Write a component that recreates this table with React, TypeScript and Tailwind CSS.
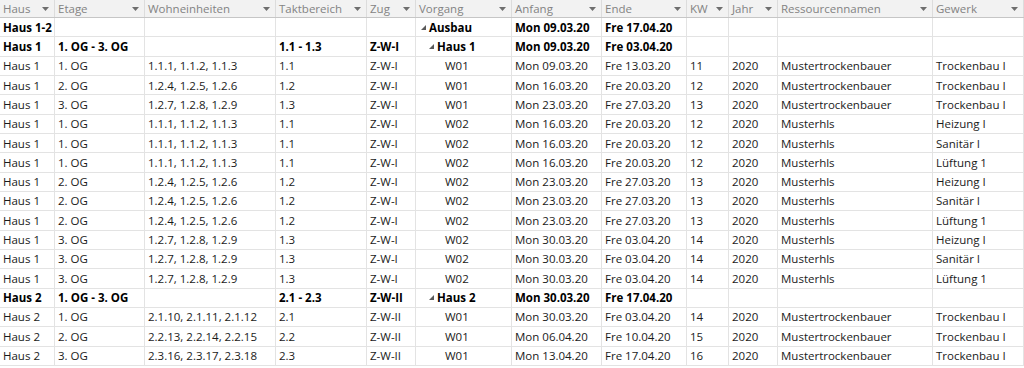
const cols = [
  "Haus",
  "Etage",
  "Wohneinheiten",
  "Taktbereich",
  "Zug",
  "Vorgang",
  "Anfang",
  "Ende",
  "KW",
  "Jahr",
  "Ressourcennamen",
  "Gewerk",
];

type Row = {
  bold?: boolean;
  level: number; // 0 = Ausbau, 1 = Haus, 2 = Vorgang
  cells: string[];
};

const hls = (
  haus: string,
  etage: string,
  we: string,
  takt: string,
  zug: string,
  w: string,
  start: string,
  end: string,
  kw: string,
  res: string,
  gewerk: string
): Row => ({
  level: 2,
  cells: [haus, etage, we, takt, zug, w, start, end, kw, "2020", res, gewerk],
});

const rows: Row[] = [
  { bold: true, level: 0, cells: ["Haus 1-2", "", "", "", "", "Ausbau", "Mon 09.03.20", "Fre 17.04.20", "", "", "", ""] },
  { bold: true, level: 1, cells: ["Haus 1", "1. OG - 3. OG", "", "1.1 - 1.3", "Z-W-I", "Haus 1", "Mon 09.03.20", "Fre 03.04.20", "", "", "", ""] },
  hls("Haus 1", "1. OG", "1.1.1, 1.1.2, 1.1.3", "1.1", "Z-W-I", "W01", "Mon 09.03.20", "Fre 13.03.20", "11", "Mustertrockenbauer", "Trockenbau I"),
  hls("Haus 1", "2. OG", "1.2.4, 1.2.5, 1.2.6", "1.2", "Z-W-I", "W01", "Mon 16.03.20", "Fre 20.03.20", "12", "Mustertrockenbauer", "Trockenbau I"),
  hls("Haus 1", "3. OG", "1.2.7, 1.2.8, 1.2.9", "1.3", "Z-W-I", "W01", "Mon 23.03.20", "Fre 27.03.20", "13", "Mustertrockenbauer", "Trockenbau I"),
  hls("Haus 1", "1. OG", "1.1.1, 1.1.2, 1.1.3", "1.1", "Z-W-I", "W02", "Mon 16.03.20", "Fre 20.03.20", "12", "Musterhls", "Heizung I"),
  hls("Haus 1", "1. OG", "1.1.1, 1.1.2, 1.1.3", "1.1", "Z-W-I", "W02", "Mon 16.03.20", "Fre 20.03.20", "12", "Musterhls", "Sanitär I"),
  hls("Haus 1", "1. OG", "1.1.1, 1.1.2, 1.1.3", "1.1", "Z-W-I", "W02", "Mon 16.03.20", "Fre 20.03.20", "12", "Musterhls", "Lüftung 1"),
  hls("Haus 1", "2. OG", "1.2.4, 1.2.5, 1.2.6", "1.2", "Z-W-I", "W02", "Mon 23.03.20", "Fre 27.03.20", "13", "Musterhls", "Heizung I"),
  hls("Haus 1", "2. OG", "1.2.4, 1.2.5, 1.2.6", "1.2", "Z-W-I", "W02", "Mon 23.03.20", "Fre 27.03.20", "13", "Musterhls", "Sanitär I"),
  hls("Haus 1", "2. OG", "1.2.4, 1.2.5, 1.2.6", "1.2", "Z-W-I", "W02", "Mon 23.03.20", "Fre 27.03.20", "13", "Musterhls", "Lüftung 1"),
  hls("Haus 1", "3. OG", "1.2.7, 1.2.8, 1.2.9", "1.3", "Z-W-I", "W02", "Mon 30.03.20", "Fre 03.04.20", "14", "Musterhls", "Heizung I"),
  hls("Haus 1", "3. OG", "1.2.7, 1.2.8, 1.2.9", "1.3", "Z-W-I", "W02", "Mon 30.03.20", "Fre 03.04.20", "14", "Musterhls", "Sanitär I"),
  hls("Haus 1", "3. OG", "1.2.7, 1.2.8, 1.2.9", "1.3", "Z-W-I", "W02", "Mon 30.03.20", "Fre 03.04.20", "14", "Musterhls", "Lüftung 1"),
  { bold: true, level: 1, cells: ["Haus 2", "1. OG - 3. OG", "", "2.1 - 2.3", "Z-W-II", "Haus 2", "Mon 30.03.20", "Fre 17.04.20", "", "", "", ""] },
  hls("Haus 2", "1. OG", "2.1.10, 2.1.11, 2.1.12", "2.1", "Z-W-II", "W01", "Mon 30.03.20", "Fre 03.04.20", "14", "Mustertrockenbauer", "Trockenbau I"),
  hls("Haus 2", "2. OG", "2.2.13, 2.2.14, 2.2.15", "2.2", "Z-W-II", "W01", "Mon 06.04.20", "Fre 10.04.20", "15", "Mustertrockenbauer", "Trockenbau I"),
  hls("Haus 2", "3. OG", "2.3.16, 2.3.17, 2.3.18", "2.3", "Z-W-II", "W01", "Mon 13.04.20", "Fre 17.04.20", "16", "Mustertrockenbauer", "Trockenbau I"),
];

const grid =
  "grid grid-cols-[55px_90px_131px_91px_49px_96px_90px_85px_42px_49px_155px_91px]";

function FilterArrow() {
  return (
    <svg width="7" height="4" viewBox="0 0 7 4" className="shrink-0">
      <polygon points="0,0 7,0 3.5,4" fill="#6e6e6e" />
    </svg>
  );
}

function TreeToggle() {
  return (
    <svg width="5" height="5" viewBox="0 0 5 5" className="mr-[3px] shrink-0">
      <polygon points="5,0 5,5 0,5" fill="#5a5a5a" />
    </svg>
  );
}

function VorgangCell({ row }: { row: Row }) {
  const text = row.cells[5];
  if (row.level === 0) {
    return (
      <div className="flex items-center pl-[2px]">
        <TreeToggle />
        {text}
      </div>
    );
  }
  if (row.level === 1) {
    return (
      <div className="flex items-center pl-[10px]">
        <TreeToggle />
        {text}
      </div>
    );
  }
  return <div className="pl-[26px]">{text}</div>;
}

export default function App() {
  return (
    <div
      className="h-[368px] w-[1024px] overflow-hidden bg-white text-[11.5px] text-[#1a1a1a]"
      style={{ fontFamily: '"Open Sans", "Noto Sans", sans-serif' }}
    >
      <div className={`${grid} h-[18px] border-b border-[#c6c6c6] bg-[#f2f2f2] text-[#838383]`}>
        {cols.map((c) => (
          <div
            key={c}
            className="flex items-center justify-between border-r border-[#dcdcdc] pl-[3px] pr-[5px]"
          >
            <span>{c}</span>
            <FilterArrow />
          </div>
        ))}
      </div>

      {rows.map((row, i) => (
        <div
          key={i}
          className={`${grid} h-[19.33px] border-b border-[#e3e3e3] ${row.bold ? "font-bold text-black" : ""}`}
        >
          {row.cells.map((cell, j) => (
            <div
              key={j}
              className="flex items-center overflow-hidden whitespace-nowrap border-r border-[#e3e3e3] px-[3px]"
            >
              {j === 5 ? <VorgangCell row={row} /> : cell}
            </div>
          ))}
        </div>
      ))}
    </div>
  );
}
